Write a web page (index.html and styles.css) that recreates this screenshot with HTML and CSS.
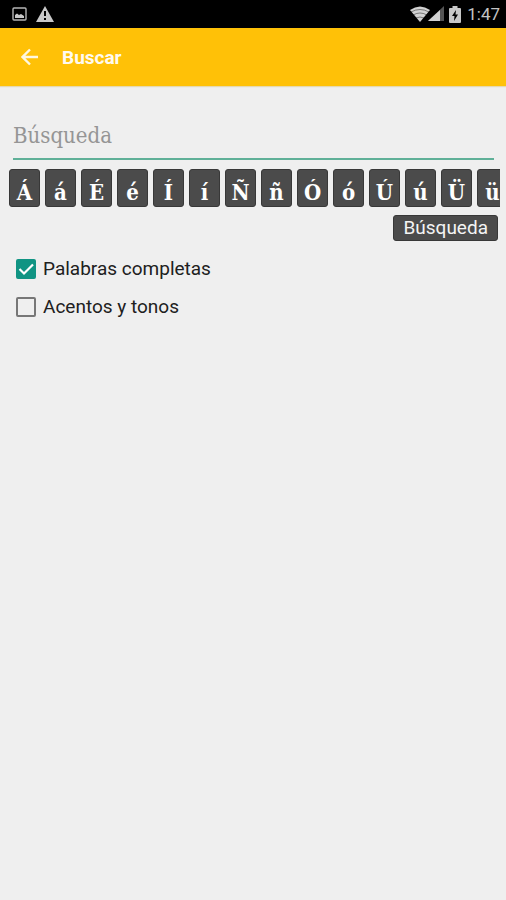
FILE: index.html
```html
<!DOCTYPE html>
<html lang="es">
<head>
<meta charset="utf-8">
<meta name="viewport" content="width=device-width, initial-scale=1">
<title>Buscar</title>
<link rel="stylesheet" href="styles.css">
</head>
<body>
<div class="status">
  <div class="status-group notices">
    <svg width="16" height="14" viewBox="0 0 16 14" aria-hidden="true"><rect x="1" y="1" width="13" height="12" rx="1" fill="none" stroke="#b5b5b5" stroke-width="1.4"/><path d="M3 11V8l2-1.500 2 1.500 2-1 3 2v2z" fill="#c8c8c8"/></svg>
    <svg width="18" height="16" viewBox="0 0 18 16" aria-hidden="true"><path d="M9 0l9 16H0z" fill="#c8c8c8"/><path d="M8 5h2v5H8zM8 12h2v2H8z" fill="#000"/></svg>
  </div>
  <div class="status-group">
    <svg width="34" height="16" viewBox="0 0 34 16" aria-hidden="true"><path d="M0 4Q10-3 20 4L10 16z" fill="#d2d2d2"/><path d="M1 6q9-5 18 0M3 9q7-4 14 0M6 12q4-2 8 0" fill="none" stroke="#000" stroke-opacity=".55" stroke-width=".8"/><path d="M34 0v15H18z" fill="#555"/><path d="M30 4v11H18z" fill="#d2d2d2"/></svg>
    <svg class="battery" width="12" height="17" viewBox="0 0 12 17" aria-hidden="true"><path d="M3.500 0h5v2H11q1 0 1 1v13q0 1-1 1H1q-1 0-1-1V3q0-1 1-1h2.500z" fill="#c8c8c8"/><path d="M7 4L3 10h2.500L5 15l4-6.500H6.500z" fill="#000"/></svg>
    <span>1:47</span>
  </div>
</div>
<header class="bar">
  <button class="back" type="button" aria-label="Atrás">
    <svg width="18" height="18" viewBox="0 0 18 18" aria-hidden="true"><path d="M17 9H2M9 1.500L1.500 9 9 16.500" fill="none" stroke="#fff8e0" stroke-width="2.400"/></svg>
  </button>
  <h1>Buscar</h1>
</header>
<main>
  <input class="query" type="text" placeholder="Búsqueda" aria-label="Búsqueda">
  <div class="keys">
    <button type="button">Á</button><button type="button">á</button><button type="button">É</button><button type="button">é</button><button type="button">Í</button><button type="button">í</button><button type="button">Ñ</button><button type="button">ñ</button><button type="button">Ó</button><button type="button">ó</button><button type="button">Ú</button><button type="button">ú</button><button type="button">Ü</button><button type="button">ü</button>
  </div>
  <button class="submit" type="button">Búsqueda</button>
  <div class="options">
    <label><input type="checkbox" checked><svg class="tick" width="20" height="20" viewBox="0 0 20 20" aria-hidden="true"><path d="M3.500 10l4.500 4.500L17 5.500" fill="none" stroke="#fff" stroke-width="2.200"/></svg>Palabras completas</label>
    <label><input type="checkbox">Acentos y tonos</label>
  </div>
</main>
</body>
</html>
```
FILE: styles.css
```css
* { box-sizing: border-box; }

body {
  margin: 0;
  min-height: 100vh;
  background: #efefef;
  color: #202020;
  font-family: Roboto, sans-serif;
}

button {
  border: 0;
  padding: 0;
  font: inherit;
}

.status {
  display: flex;
  justify-content: space-between;
  height: 28px;
  padding: 0 6px 0 12px;
  background: #000;
  color: #c4c4c4;
  font-size: 17px;
}

.status-group {
  display: flex;
  align-items: center;
}

.notices { gap: 8px; }
.battery { margin: 0 6px 0 5px; }

.bar {
  display: flex;
  align-items: center;
  gap: 23px;
  height: 58px;
  padding: 0 21px;
  background: #ffc107;
  box-shadow: 0 1px 1px #e5d9b0;
}

.back {
  display: flex;
  background: none;
}

.bar h1 {
  margin: 0;
  color: #fffaf0;
  font-size: 19px;
  font-weight: 700;
}

main {
  display: flex;
  flex-direction: column;
  padding: 30px 6px 0 9px;
}

.query {
  height: 44px;
  margin: 0 6px 9px 4px;
  padding: 0 0 4px;
  border: 0;
  border-bottom: 2px solid #5fb098;
  border-radius: 0;
  outline: 0;
  background: none;
  font-family: "DejaVu Serif Condensed", "DejaVu Serif", serif;
  font-size: 22px;
}

.query::placeholder {
  color: #959595;
  opacity: 1;
}

.keys {
  display: flex;
  gap: 5px;
  overflow: hidden;
}

.keys button {
  flex: none;
  width: 31px;
  height: 38px;
  padding-top: 8px;
  border: 1px solid #383838;
  border-radius: 3px;
  background: #4b4b4b;
  color: #fff;
  font: 700 22px/24px "DejaVu Serif Condensed", "DejaVu Serif", serif;
}

.submit {
  align-self: flex-end;
  height: 26px;
  margin: 8px 2px 0 0;
  padding: 0 9px;
  border: 1px solid #383838;
  border-radius: 3px;
  background: #4b4b4b;
  color: #f4f4f4;
  font-size: 19px;
  line-height: 24px;
}

.options {
  display: flex;
  flex-direction: column;
  gap: 14px;
  margin-top: 16px;
  padding-left: 7px;
}

.options label {
  display: flex;
  align-items: center;
  align-self: flex-start;
  position: relative;
  gap: 7px;
  font-size: 19px;
  line-height: 24px;
}

.options input {
  appearance: none;
  width: 20px;
  height: 20px;
  margin: 0;
  border: 2px solid #777;
  border-radius: 2px;
}

.options input:checked {
  border-color: #109483;
  background: #109483;
}

.tick {
  position: absolute;
  left: 0;
  top: 2px;
  pointer-events: none;
  visibility: hidden;
}

.options input:checked + .tick { visibility: visible; }
```
